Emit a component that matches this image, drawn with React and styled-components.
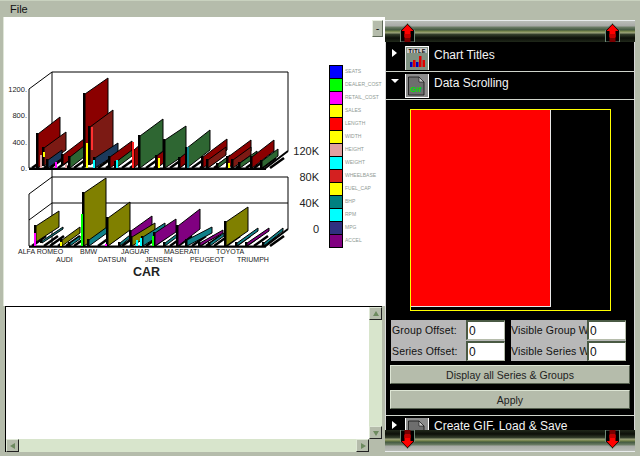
import React from 'react';
import styled, { createGlobalStyle } from 'styled-components';

const GlobalStyle = createGlobalStyle`
  html, body {
    margin: 0;
    padding: 0;
    background: #b5bcab;
  }
  body {
    font-family: "Liberation Sans", Arial, sans-serif;
  }
`;

const Window = styled.div`
  width: 640px;
  height: 456px;
  overflow: hidden;
  display: flex;
  flex-direction: column;
  background: #b5bcab;
`;

const MenuBar = styled.div`
  height: 17px;
  flex: none;
  display: flex;
  align-items: center;
  padding-left: 10px;
  box-sizing: border-box;
  border-top: 1px solid #c9d2bf;
  font-size: 11px;
  color: #111;
`;

const Main = styled.div`
  flex: 1;
  display: flex;
  min-height: 0;
`;

const LeftColumn = styled.div`
  position: relative;
  width: 385px;
  flex: none;
  display: flex;
  flex-direction: column;
  box-sizing: border-box;
  padding-left: 3px;
`;

const ChartArea = styled.div`
  height: 289px;
  flex: none;
  display: flex;
  align-items: flex-start;
  background: #fff;
  box-shadow: inset 1px 0 0 #dfe6d8;
`;

const ChartSvg = styled.svg`
  display: block;
  flex: none;
`;

const Legend = styled.div`
  display: flex;
  flex-direction: column;
  margin: 48px 0 0 4px;
`;

const LegendRow = styled.div`
  display: flex;
  align-items: center;
  height: 13px;
  gap: 2px;
`;

const Swatch = styled.span`
  width: 12px;
  height: 12px;
  flex: none;
  background: ${(p) => p.$color};
  border: 1px solid #000;
  border-bottom-width: 0;
  box-sizing: content-box;
  ${(p) => p.$last && 'border-bottom-width: 1px;'}
`;

const LegendText = styled.span`
  font-size: 5px;
  line-height: 5px;
  color: #8f9a94;
  white-space: nowrap;
`;

const CollapseButton = styled.button`
  position: absolute;
  top: 3px;
  right: 2px;
  width: 11px;
  height: 17px;
  padding: 0;
  display: flex;
  align-items: center;
  justify-content: center;
  font-size: 11px;
  line-height: 1;
  color: #111;
  background: #b5bcab;
  border: 1px solid;
  border-color: #e8efe0 #5f6a58 #5f6a58 #e8efe0;
  font-family: inherit;
`;

const TextBox = styled.div`
  margin: 0 3px 0 2px;
  height: 146px;
  flex: none;
  display: grid;
  grid-template-columns: 1fr 13px;
  grid-template-rows: 1fr 13px;
  box-sizing: border-box;
  border-top: 1px solid #000;
  border-left: 1px solid #000;
  background: #fff;
`;

const Editor = styled.div`
  background: #fff;
`;

const ScrollTrack = styled.div`
  display: flex;
  flex-direction: ${(p) => (p.$horizontal ? 'row' : 'column')};
  justify-content: space-between;
  background: #d8e5cc;
`;

const ScrollButton = styled.div`
  width: 13px;
  height: 13px;
  display: flex;
  align-items: center;
  justify-content: center;
  box-sizing: border-box;
  background: #b5bcab;
  border: 1px solid;
  border-color: #dfe8d6 #222 #222 #dfe8d6;
`;

const ScrollCorner = styled.div`
  background: #b5bcab;
`;

const RightColumn = styled.div`
  width: 255px;
  flex: none;
  display: flex;
  flex-direction: column;
  padding: 3px 0 4px;
  box-sizing: border-box;
`;

const SliderBar = styled.div`
  position: relative;
  height: 22px;
  flex: none;
  width: 250px;
  background: linear-gradient(
    ${(p) => (p.$flip ? '0deg' : '180deg')},
    #e8ecec 0,
    #e8ecec 1px,
    #b9bdb7 1px,
    #a8aaa6 6px,
    #6f7f68 7px,
    #42583f 10px,
    #6f7f45 11px,
    #a0a67e 13px,
    #38432f 14px,
    #0c0f08 18px,
    #20281a 22px
  );
`;

const SliderThumb = styled.svg`
  position: absolute;
  top: 3px;
  left: ${(p) => p.$left}px;
  ${(p) => p.$flip && 'top: 0; transform: scaleY(-1);'}
`;

const Panel = styled.div`
  flex: 1;
  min-height: 0;
  overflow: hidden;
  width: 250px;
  box-sizing: border-box;
  padding-top: 2px;
  background: #000;
  border-left: 1px solid #d8d8d8;
  border-right: 1px solid #d8d8d8;
  display: flex;
  flex-direction: column;
`;

const SectionRow = styled.div`
  height: 28px;
  flex: none;
  display: flex;
  align-items: center;
  box-sizing: border-box;
  border-bottom: 1px solid ${(p) => (p.$last ? 'transparent' : '#cfd4cb')};
  padding-left: 4px;
`;

const SectionLabel = styled.span`
  color: #f4f4f4;
  font-size: 12px;
  white-space: nowrap;
  margin-bottom: ${(p) => (p.$last ? 8 : 6)}px;
`;

const Caret = styled.svg`
  width: 10px;
  height: 10px;
  flex: none;
  margin: 0 5px 10px 0;
`;

const SectionIcon = styled.svg`
  width: 24px;
  height: 24px;
  flex: none;
  margin-right: 5px;
`;

const ScrollPreview = styled.div`
  margin: 9px 0 0 24px;
  width: 201px;
  height: 202px;
  flex: none;
  box-sizing: border-box;
  border: 1px solid #ffff00;
`;

const PreviewBlock = styled.div`
  width: 140px;
  height: 197px;
  box-sizing: border-box;
  background: #ff0000;
  border-right: 1px solid #e8e8e8;
  border-bottom: 1px solid #e8e8e8;
`;

const FieldGrid = styled.div`
  margin: 9px 0 0 5px;
  display: flex;
  gap: 6px;
  flex: none;
`;

const FieldGroup = styled.div`
  width: ${(p) => p.$width}px;
  background: #b8b8b8;
  display: flex;
  flex-direction: column;
  gap: 1px;
`;

const FieldRow = styled.div`
  display: flex;
  height: 20px;
  align-items: stretch;
`;

const FieldLabel = styled.span`
  flex: 1;
  min-width: 0;
  white-space: nowrap;
  font-size: 10.5px;
  letter-spacing: 0.15px;
  line-height: 20px;
  color: #111;
  padding-left: ${(p) => (p.$flush ? 0 : 1)}px;
`;

const FieldInput = styled.input`
  width: 39px;
  flex: none;
  box-sizing: border-box;
  border-style: solid;
  border-color: #4a5a44 #b5bcab #b5bcab #4a5a44;
  border-width: 2px 1px 1px 2px;
  padding: 0 0 0 1px;
  background: #fff;
  font-family: inherit;
  font-size: 12px;
  color: #111;
  outline: none;
`;

const ActionButton = styled.button`
  margin: ${(p) => p.$top}px 0 0 4px;
  width: 240px;
  height: 19px;
  flex: none;
  padding: 0;
  background: #b5bcab;
  border: 1px solid;
  border-color: #dde5d4 #55604f #55604f #dde5d4;
  font-family: inherit;
  font-size: 10.5px;
  color: #222;
`;

const Divider = styled.div`
  height: 1px;
  flex: none;
  margin-top: 6px;
  background: #cfd4cb;
`;

const AxisText = styled.text`
  font-family: "Liberation Sans", Arial, sans-serif;
  font-size: ${(p) => p.$size}px;
  fill: #222;
  font-weight: ${(p) => (p.$bold ? 700 : 400)};
`;

const DARK = '#8b0000';
const RUST = '#7c1a14';
const NAVY = '#1c3a5c';
const GREEN = '#2e6632';
const OLIVE = '#808000';
const TEAL = '#108088';
const PURPLE = '#800080';

// x, base y, front top y, colour, depth x, depth y
const topBars = [
  [38, 168, 134, DARK, 22, 17],
  [44, 166, 148, RUST, 22, 16],
  [48, 168, 160, NAVY, 14, 10],
  [63, 165, 155, DARK, 21, 16],
  [70, 168, 157, GREEN, 14, 11],
  [85, 166, 94, DARK, 23, 16],
  [90, 165, 127, RUST, 23, 17],
  [95, 168, 158, NAVY, 23, 15],
  [110, 168, 157, DARK, 22, 16],
  [116, 168, 162, GREEN, 16, 12],
  [134, 168, 150, DARK, 8, 7],
  [140, 168, 136, GREEN, 23, 17],
  [157, 168, 156, DARK, 8, 6],
  [165, 168, 140, GREEN, 21, 14],
  [180, 168, 158, DARK, 6, 5],
  [187, 168, 148, GREEN, 23, 18],
  [203, 168, 157, DARK, 24, 18],
  [208, 168, 160, RUST, 18, 13],
  [218, 168, 164, GREEN, 12, 9],
  [228, 168, 157, DARK, 23, 17],
  [233, 168, 160, RUST, 18, 13],
  [240, 168, 163, GREEN, 17, 12],
  [252, 168, 157, DARK, 22, 17],
  [262, 168, 161, GREEN, 16, 12],
];

const bottomBars = [
  [36, 242, 226, OLIVE, 23, 15],
  [42, 243, 241, TEAL, 21, 14],
  [62, 246, 240, OLIVE, 18, 13],
  [70, 246, 243, TEAL, 10, 7],
  [84, 246, 193, OLIVE, 22, 15],
  [89, 246, 240, TEAL, 18, 13],
  [108, 246, 218, OLIVE, 22, 16],
  [120, 246, 243, TEAL, 10, 8],
  [131, 240, 231, PURPLE, 21, 15],
  [132, 246, 237, OLIVE, 23, 14],
  [143, 246, 237, TEAL, 22, 14],
  [155, 246, 233, PURPLE, 21, 14],
  [165, 246, 243, TEAL, 12, 9],
  [178, 246, 226, PURPLE, 22, 17],
  [187, 246, 240, TEAL, 25, 13],
  [200, 246, 243, PURPLE, 23, 13],
  [210, 246, 243, TEAL, 14, 10],
  [226, 246, 222, OLIVE, 22, 15],
  [237, 246, 243, TEAL, 21, 15],
  [247, 246, 243, PURPLE, 22, 15],
  [264, 246, 243, TEAL, 19, 15],
];

// thin front faces: x, top, bottom, colour
const topEdges = [
  [40, 155, 168, '#e0a0a0'],
  [43, 152, 157, '#ffff00'],
  [55, 162, 168, '#ff00ff'],
  [65, 164, 168, '#e0a0a0'],
  [86, 143, 168, '#ffff00'],
  [91, 127, 150, '#ff3030'],
  [93, 160, 168, '#00ffff'],
  [116, 160, 168, '#00ffff'],
  [132, 142, 168, '#ff2020'],
  [158, 158, 168, '#ffff00'],
  [187, 147, 168, '#108088'],
  [228, 163, 168, '#ffff00'],
];

const bottomEdges = [
  [34, 233, 246, '#ff00ff'],
  [60, 242, 246, '#ffff00'],
  [81, 214, 246, '#00ff00'],
  [136, 240, 246, '#00ffff'],
  [140, 238, 246, '#00ffff'],
  [152, 236, 246, '#00ff00'],
  [105, 244, 246, '#ff00ff'],
];

const stripeStarts = [
  32, 44, 50, 58, 66, 74, 82, 98, 106, 122, 130, 146, 154, 170, 178, 192, 200, 206, 214, 226, 236, 246, 254, 262, 270,
];

const floorTicks = (y0) =>
  stripeStarts.map((x) => (
    <line key={x} x1={x} y1={y0} x2={x + 14} y2={y0 - 10} stroke="#000" strokeWidth="2.5" />
  ));

const renderBars = (bars) =>
  bars.map(([x, base, top, color, dx, dy], i) => (
    <g key={i}>
      <rect x={x - 2} y={top - 1} width="2" height={base - top + 1} fill="#000" />
      <polygon
        points={`${x},${base} ${x},${top} ${x + dx},${top - dy} ${x + dx},${base - dy}`}
        fill={color}
        stroke="#000"
        strokeWidth="1"
      />
    </g>
  ));

const renderEdges = (edges) =>
  edges.map(([x, top, bottom, color], i) => (
    <rect key={i} x={x} y={top} width="2" height={bottom - top} fill={color} />
  ));

const carLabels = [
  ['ALFA ROMEO', 18, 254],
  ['AUDI', 56, 262],
  ['BMW', 80, 254],
  ['DATSUN', 98, 262],
  ['JAGUAR', 121, 254],
  ['JENSEN', 145, 262],
  ['MASERATI', 164, 254],
  ['PEUGEOT', 190, 262],
  ['TOYOTA', 216, 254],
  ['TRIUMPH', 237, 262],
];

const BarChart = () => (
  <ChartSvg width="322" height="289" viewBox="3 17 322 289">
    <g fill="none" stroke="#000">
      <path d="M52 72H288V151M52 72V246M29 89L52 72M29 89V168" />
      <path d="M29 168.5H265L288 151" strokeWidth="2" />
      <path d="M52 177H288V229M52 203H288M29 194L52 177M29 220L52 203M29 194V246" />
      <path d="M29 246.5H265L288 229" strokeWidth="2" />
    </g>
    {floorTicks(168)}
    {renderBars(topBars)}
    {renderEdges(topEdges)}
    {floorTicks(246)}
    {renderBars(bottomBars)}
    {renderEdges(bottomEdges)}
    <rect x="29" y="168" width="237" height="2" fill="#000" />
    <rect x="29" y="246" width="237" height="1.5" fill="#000" />
    <AxisText $size={7.5} x="27" y="92" textAnchor="end">1200.</AxisText>
    <AxisText $size={7.5} x="27" y="118" textAnchor="end">800.</AxisText>
    <AxisText $size={7.5} x="27" y="145" textAnchor="end">400.</AxisText>
    <AxisText $size={7.5} x="27" y="171" textAnchor="end">0.</AxisText>
    <AxisText $size={11} x="319" y="155" textAnchor="end">120K</AxisText>
    <AxisText $size={11} x="319" y="181" textAnchor="end">80K</AxisText>
    <AxisText $size={11} x="319" y="207" textAnchor="end">40K</AxisText>
    <AxisText $size={11} x="319" y="233" textAnchor="end">0</AxisText>
    {carLabels.map(([name, x, y]) => (
      <AxisText key={name} $size={7} x={x} y={y}>{name}</AxisText>
    ))}
    <AxisText $size={12.5} $bold x="133" y="276">CAR</AxisText>
  </ChartSvg>
);

const legendItems = [
  ['SEATS', '#0000ff'],
  ['DEALER_COST', '#00ff00'],
  ['RETAIL_COST', '#ff00ff'],
  ['SALES', '#ffff00'],
  ['LENGTH', '#ff0000'],
  ['WIDTH', '#ffff00'],
  ['HEIGHT', '#e0a0a0'],
  ['WEIGHT', '#00ffff'],
  ['WHEELBASE', '#d42020'],
  ['FUEL_CAP', '#ffff00'],
  ['BHP', '#008080'],
  ['RPM', '#00ffff'],
  ['MPG', '#303080'],
  ['ACCEL', '#800080'],
];

const Arrow = ({ dir }) => {
  const points = {
    up: '4,1 1,6 7,6',
    down: '1,2 7,2 4,7',
    left: '6,1 6,7 1,4',
    right: '2,1 2,7 7,4',
  };
  return (
    <svg width="8" height="8" viewBox="0 0 8 8">
      <polygon points={points[dir]} fill="#6d8a5f" />
    </svg>
  );
};

const Thumb = ({ left, flip }) => (
  <SliderThumb $left={left} $flip={flip} width="15" height="19" viewBox="0 0 15 19">
    <polygon points="0.5,19 0.5,7 7.5,0.5 14.5,7 14.5,19" fill="#000" stroke="#6f8a78" />
    <polygon points="7.5,1.5 13.5,8 10.5,8 10.5,14 4.5,14 4.5,8 1.5,8" fill="#ff0000" />
    <rect x="4.5" y="11" width="6" height="4" fill="#c00000" />
    <rect x="4.5" y="15" width="6" height="4" fill="#7a0000" />
  </SliderThumb>
);

const CaretRight = () => (
  <Caret viewBox="0 0 10 10">
    <polygon points="2,1 7,5 2,9" fill="#fff" />
  </Caret>
);

const CaretDown = () => (
  <Caret viewBox="0 0 10 10">
    <polygon points="1,3 9,3 5,7" fill="#fff" />
  </Caret>
);

const TitleIcon = () => (
  <SectionIcon viewBox="0 0 24 24">
    <rect width="24" height="24" fill="#7f9181" />
    <path d="M0 0H24V24H23V1H0Z" fill="#fff" />
    <path d="M0 0H1V24H0Z" fill="#e8e8e8" />
    <rect x="2" y="2" width="20" height="5" fill="#c8c8c8" />
    <text x="3.5" y="7" fontFamily="Liberation Sans" fontSize="5.5" fontWeight="700" fill="#000" letterSpacing="0.4">TITLE</text>
    <rect x="5" y="16" width="2.5" height="5" fill="#0000c0" />
    <rect x="8" y="14" width="2.5" height="7" fill="#e00000" />
    <rect x="11" y="16" width="2.5" height="5" fill="#0000c0" />
    <rect x="14" y="10" width="2.5" height="11" fill="#e00000" />
    <rect x="17.5" y="14" width="2.5" height="7" fill="#e00000" />
  </SectionIcon>
);

const GifIcon = () => (
  <SectionIcon viewBox="0 0 24 24">
    <rect width="24" height="24" fill="#8c8c8c" />
    <path d="M0 24H24V0H23V23H0Z" fill="#fff" />
    <path d="M0 0H1V24H0Z" fill="#fff" />
    <polygon points="3.5,3 14,3 19,8 19,21 3.5,21" fill="#6e6e6e" stroke="#111" strokeWidth="0.8" />
    <polygon points="14,3 14,8 19,8" fill="#c8c8c8" stroke="#111" strokeWidth="0.6" />
    <text x="5" y="18" fontFamily="Liberation Sans" fontSize="8" fontWeight="700" fill="#00e000">Gif</text>
  </SectionIcon>
);

const App = () => (
  <Window>
    <GlobalStyle />
    <MenuBar>File</MenuBar>
    <Main>
      <LeftColumn>
        <ChartArea>
          <BarChart />
          <Legend>
            {legendItems.map(([name, color], i) => (
              <LegendRow key={name}>
                <Swatch $color={color} $last={i === legendItems.length - 1} />
                <LegendText>{name}</LegendText>
              </LegendRow>
            ))}
          </Legend>
        </ChartArea>
        <TextBox>
          <Editor />
          <ScrollTrack>
            <ScrollButton><Arrow dir="up" /></ScrollButton>
            <ScrollButton><Arrow dir="down" /></ScrollButton>
          </ScrollTrack>
          <ScrollTrack $horizontal>
            <ScrollButton><Arrow dir="left" /></ScrollButton>
            <ScrollButton><Arrow dir="right" /></ScrollButton>
          </ScrollTrack>
          <ScrollCorner />
        </TextBox>
        <CollapseButton>-</CollapseButton>
      </LeftColumn>
      <RightColumn>
        <SliderBar>
          <Thumb left={15} />
          <Thumb left={220} />
        </SliderBar>
        <Panel>
          <SectionRow>
            <CaretRight />
            <TitleIcon />
            <SectionLabel>Chart Titles</SectionLabel>
          </SectionRow>
          <SectionRow>
            <CaretDown />
            <GifIcon />
            <SectionLabel>Data Scrolling</SectionLabel>
          </SectionRow>
          <ScrollPreview>
            <PreviewBlock />
          </ScrollPreview>
          <FieldGrid>
            <FieldGroup $width={114}>
              <FieldRow>
                <FieldLabel>Group Offset:</FieldLabel>
                <FieldInput defaultValue="0" />
              </FieldRow>
              <FieldRow>
                <FieldLabel>Series Offset:</FieldLabel>
                <FieldInput defaultValue="0" />
              </FieldRow>
            </FieldGroup>
            <FieldGroup $width={115}>
              <FieldRow>
                <FieldLabel $flush>Visible Group W</FieldLabel>
                <FieldInput defaultValue="0" />
              </FieldRow>
              <FieldRow>
                <FieldLabel $flush>Visible Series W</FieldLabel>
                <FieldInput defaultValue="0" />
              </FieldRow>
            </FieldGroup>
          </FieldGrid>
          <ActionButton $top={4}>Display all Series &amp; Groups</ActionButton>
          <ActionButton $top={6}>Apply</ActionButton>
          <Divider />
          <SectionRow $last>
            <CaretRight />
            <GifIcon />
            <SectionLabel $last>Create GIF, Load &amp; Save</SectionLabel>
          </SectionRow>
        </Panel>
        <SliderBar $flip>
          <Thumb left={15} flip />
          <Thumb left={220} flip />
        </SliderBar>
      </RightColumn>
    </Main>
  </Window>
);

export default App;
